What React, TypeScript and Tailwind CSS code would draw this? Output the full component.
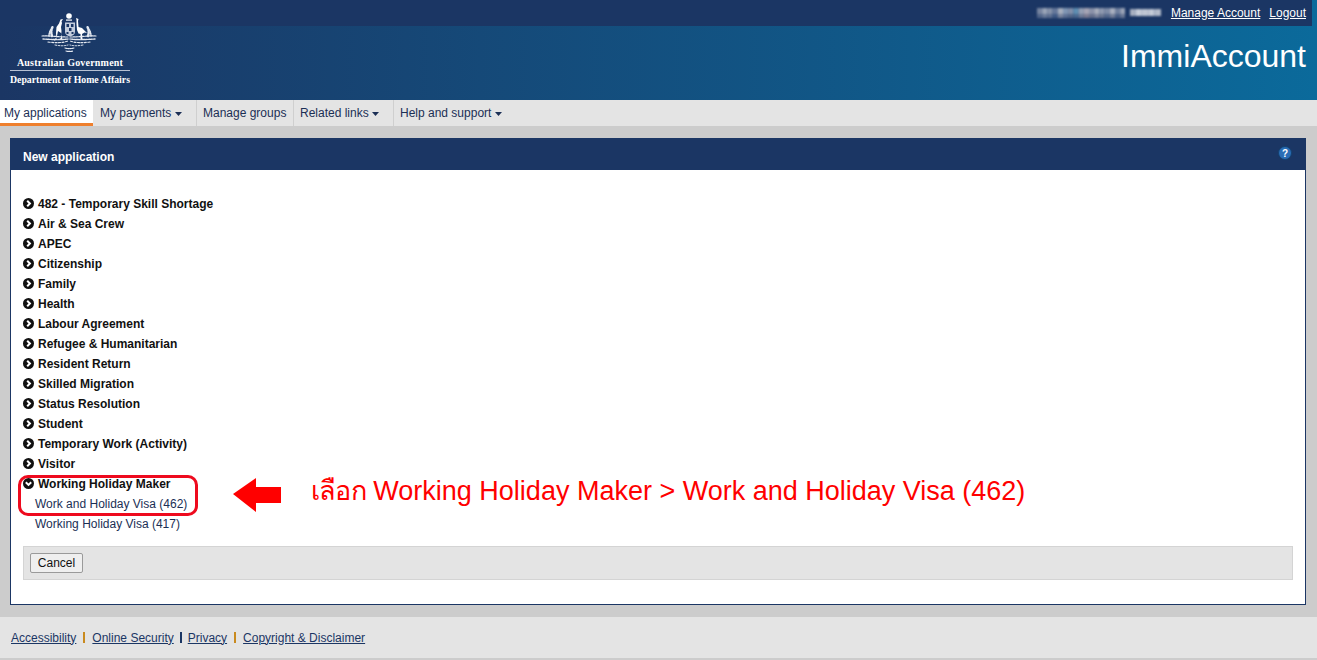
import React from "react";

const Circle = ({ open }: { open?: boolean }) => (
  <svg width="11" height="11" viewBox="0 0 11 11" className="-mt-[1px] shrink-0">
    <circle cx="5.5" cy="5.5" r="5.5" fill="#111" />
    {open ? (
      <path d="M2.8 4.2 L5.5 6.9 L8.2 4.2" fill="none" stroke="#fff" strokeWidth="2" />
    ) : (
      <path d="M4.2 2.8 L6.9 5.5 L4.2 8.2" fill="none" stroke="#fff" strokeWidth="2" />
    )}
  </svg>
);

const Caret = ({ tight }: { tight?: boolean }) => (
  <svg width="7" height="4" viewBox="0 0 7 4" className={tight ? "ml-[3px] inline-block align-middle" : "ml-1 inline-block align-middle"}>
    <path d="M0 0H7L3.5 4Z" fill="#1b2f55" />
  </svg>
);

const Emblem = () => (
  <svg width="58" height="42" viewBox="0 0 58 42" className="block blur-[0.3px]">
    <circle cx="28" cy="4" r="2.800" fill="#fff" />
    <path d="M25 7.500h6v1.200h-6z" fill="#fff" />
    {/* kangaroo */}
    <path d="M22 7 L20.500 9.500 L21 11 L20 15 L20.500 19 L20 26 L18.500 27 L21.500 27.500 L20 21 L17 19 L16 24 L13 29 L15.500 27.500 L15 21 L15.500 15 L18 11.500 L19.500 7.500 Z" fill="#fff" />
    {/* emu */}
    <path d="M35 6 L37.500 7 L37 9 L37.500 15 L41 16 L46 21 L43.500 20.500 L41 22 L41.500 27 L39.500 27 L39.500 22 L37.500 21.500 L36 18 L35.500 12 L35.500 8 Z" fill="#fff" />
    {/* shield */}
    <path d="M24 10.500h10v9c0 3-2 4-5 5c-3-1-5-2-5-5z" fill="#c3ccdb" />
    <g fill="#1b3664">
      <rect x="25.500" y="12" width="2.500" height="3" />
      <rect x="30" y="12" width="2.500" height="3" />
      <rect x="28" y="16" width="2.500" height="3" />
      <rect x="25.500" y="20" width="2" height="2" />
      <rect x="30.500" y="20" width="2" height="2" />
    </g>
    {/* wreath */}
    <g fill="none" stroke="#e3e8f0" strokeLinecap="round">
      <path d="M11 24c-1-3-1-6 .5-9" strokeWidth="2.500" strokeDasharray="1.500 1" />
      <path d="M8 24c0-2 .5-4 1.500-6" strokeWidth="1.500" strokeDasharray="1 1" />
      <path d="M47 24c1-3 1-6-.5-9" strokeWidth="2.500" strokeDasharray="1.500 1" />
      <path d="M50 24c0-2-.5-4-1.500-6" strokeWidth="1.500" strokeDasharray="1 1" />
      <path d="M1 24c8-.5 15 1 26 1" strokeWidth="1.200" strokeDasharray="2 1" />
      <path d="M2 27c9 .5 16 1 25 0" strokeWidth="1.400" strokeDasharray="1.500 1" />
      <path d="M7 30c8 1 14 1 20-1" strokeWidth="1.200" strokeDasharray="2 1.500" />
      <path d="M55 24c-8-.5-15 1-26 1" strokeWidth="1.200" strokeDasharray="2 1" />
      <path d="M54 27c-9 .5-16 1-25 0" strokeWidth="1.400" strokeDasharray="1.500 1" />
      <path d="M49 30c-8 1-14 1-20-1" strokeWidth="1.200" strokeDasharray="2 1.500" />
      <path d="M14 33c5 1 9 1 13 0" strokeWidth="1" strokeDasharray="1.500 1.500" />
      <path d="M42 33c-5 1-9 1-13 0" strokeWidth="1" strokeDasharray="1.500 1.500" />
      <path d="M24 36c3 .8 6 .8 9 0" strokeWidth="1.200" strokeDasharray="1.500 1" />
      <path d="M25 39c2.500 .6 5 .6 7 0" strokeWidth="1.200" strokeDasharray="1.500 1" />
    </g>
  </svg>
);

const Blur = () => {
  const top = ["#76849f", "#9aa5b8", "#8793aa", "#65789b", "#a6aebd", "#7f95b3", "#8290aa", "#5f8fb3", "#96a0b4", "#a5a4b4", "#8a91a8", "#a9aebc", "#909ab0", "#7f8ca7", "#a8afbf", "#6f7f9d", "#9aa3b6"];
  const bottom = ["#51658a", "#697a98", "#5f7091", "#3f5a85", "#77839c", "#5d7093", "#546889", "#4a6a90", "#6f7c97", "#7c7b91", "#656f8c", "#7b839b", "#6a7691", "#54688c", "#717d97", "#475d84", "#687693"];
  return (
    <svg width="124" height="12" viewBox="0 0 124 12" className="block blur-[0.8px]">
      {top.map((c, i) => (
        <rect key={i} x={i * 5.2} y={1} width="5.200" height="6" fill={c} />
      ))}
      {bottom.map((c, i) => (
        <rect key={i} x={i * 5.2} y={7} width="5.200" height="4" fill={c} />
      ))}
      {[0, 1, 2, 3, 4].map((i) => (
        <rect key={i} x={92 + i * 6.4} y={2} width="6.400" height="7" fill={["#a9b1c1", "#c9cfda", "#bfc6d3", "#c4cbd7", "#b3bbca"][i]} />
      ))}
      <rect x="88" y="0" width="5" height="12" fill="#1b3664" />
    </svg>
  );
};

const items = [
  "482 - Temporary Skill Shortage",
  "Air & Sea Crew",
  "APEC",
  "Citizenship",
  "Family",
  "Health",
  "Labour Agreement",
  "Refugee & Humanitarian",
  "Resident Return",
  "Skilled Migration",
  "Status Resolution",
  "Student",
  "Temporary Work (Activity)",
  "Visitor",
];

const navText = "text-[12px] leading-[26px] text-[#1b2f55]";

export default function App() {
  return (
    <div className="relative flex h-[660px] w-[1317px] flex-col overflow-hidden bg-[#cccccc] font-['Liberation_Sans',Arial,sans-serif]">
      <header className="flex h-[100px] shrink-0 flex-col bg-[linear-gradient(90deg,#1b3664_0%,#0b6a9b_100%)]">
        <div className="flex h-[26px] w-[1312px] items-center justify-end bg-[#1b3664] pb-[1px] pr-[6px] text-[12px] text-white">
          <Blur />
          <a className="ml-[10px] underline">Manage Account</a>
          <a className="ml-[9px] underline">Logout</a>
        </div>
        <div className="relative flex flex-1 justify-end pr-[11px] pt-[12px]">
          <div className="text-[32px] leading-[37px] text-white">ImmiAccount</div>
        </div>
      </header>

      <nav className="flex h-[26px] shrink-0 bg-[#e4e4e4]">
        <div className={`h-[26px] w-[93px] border-b-[3px] border-[#ee7f2d] bg-white pl-[4px] ${navText}`}>My applications</div>
        <div className={`h-[26px] w-[104px] border-r border-[#cfcfcf] pl-[7px] ${navText}`}>My payments<Caret /></div>
        <div className={`h-[26px] w-[97px] border-r border-[#cfcfcf] pl-[6px] ${navText}`}>Manage groups</div>
        <div className={`h-[26px] w-[100px] border-r border-[#cfcfcf] pl-[6px] ${navText}`}>Related links<Caret tight /></div>
        <div className={`h-[26px] pl-[6px] ${navText}`}>Help and support<Caret /></div>
      </nav>

      <main className="flex-1 px-[10px] pb-[12px] pr-[11px] pt-[12px]">
        <section className="flex h-[467px] flex-col border border-[#1b3664] bg-white">
          <div className="flex h-[31px] shrink-0 items-center justify-between bg-[#1b3664] pl-[12px] pr-[13px]">
            <span className="pt-[4px] text-[12px] font-bold text-white">New application</span>
            <svg width="14" height="14" viewBox="0 0 14 14" className="-mt-[4px]">
              <circle cx="7" cy="7" r="6.500" fill="#2a6db5" stroke="#14406f" />
              <text x="7" y="10.500" textAnchor="middle" fontSize="10" fontWeight="700" fill="#fff" fontFamily="Liberation Sans">?</text>
            </svg>
          </div>
          <div className="flex flex-1 flex-col px-[12px] pt-[24px]">
            <ul className="text-[12px] leading-[20px] text-[#111]">
              {items.map((t) => (
                <li key={t} className="flex h-[20px] items-center gap-[4px] font-bold">
                  <Circle />
                  <span>{t}</span>
                </li>
              ))}
              <li className="flex h-[20px] items-center gap-[4px] font-bold">
                <Circle open />
                <span>Working Holiday Maker</span>
              </li>
              <li className="h-[20px] pl-[12px] text-[#1b2f55]">Work and Holiday Visa (462)</li>
              <li className="h-[20px] pl-[12px] text-[#1b2f55]">Working Holiday Visa (417)</li>
            </ul>
            <div className="mt-[12px] flex h-[34px] w-[1270px] items-center border border-[#d4d4d4] bg-[#e4e4e4] pl-[6px]">
              <button className="h-[20px] w-[53px] rounded-[2px] border border-[#9a9a9a] bg-[#efefef] text-[12px] text-[#111]">Cancel</button>
            </div>
          </div>
        </section>
      </main>

      <footer className="mb-[2px] flex h-[41px] shrink-0 items-center bg-[#e4e4e4] pl-[11px] text-[12px] text-[#1b3664]">
        <a className="underline">Accessibility</a>
        <span className="mx-[7px] h-[11px] w-[2px] bg-[#c98a1e]" />
        <a className="underline">Online Security</a>
        <span className="mx-[6px] h-[11px] w-[2px] bg-[#1b3664]" />
        <a className="underline">Privacy</a>
        <span className="mx-[7px] h-[11px] w-[2px] bg-[#c98a1e]" />
        <a className="underline">Copyright &amp; Disclaimer</a>
      </footer>

      {/* logo lies over the header */}
      <div className="absolute left-[10px] top-[12px] flex w-[120px] flex-col items-center font-['Liberation_Serif',serif] font-bold text-white">
        <Emblem />
        <div className="mt-[3px] text-[10px] leading-[11px] tracking-[0.2px]">Australian Government</div>
        <div className="mb-[3px] mt-[2px] h-[1px] w-[120px] bg-[#b8c2d4]" />
        <div className="whitespace-nowrap text-[9.800px] leading-[12px]">Department of Home Affairs</div>
      </div>

      {/* annotations over the page */}
      <div className="absolute left-[18px] top-[475px] h-[41px] w-[180px] rounded-[10px] border-[3px] border-[#ee0a1e]" />
      <svg width="49" height="36" viewBox="0 0 49 36" className="absolute left-[233px] top-[477px]">
        <path d="M0 17 L23 1 V10 H48 V26 H23 V35 Z" fill="#ff0000" />
      </svg>
      <div className="absolute left-[311px] top-[473px] whitespace-nowrap font-['Liberation_Sans','Noto_Sans',sans-serif] text-[27px] leading-[36px] text-[#ff0000]">
        <span className="tracking-[-0.8px]">เลือก</span> Working Holiday Maker &gt; Work and Holiday Visa (462)
      </div>
    </div>
  );
}
